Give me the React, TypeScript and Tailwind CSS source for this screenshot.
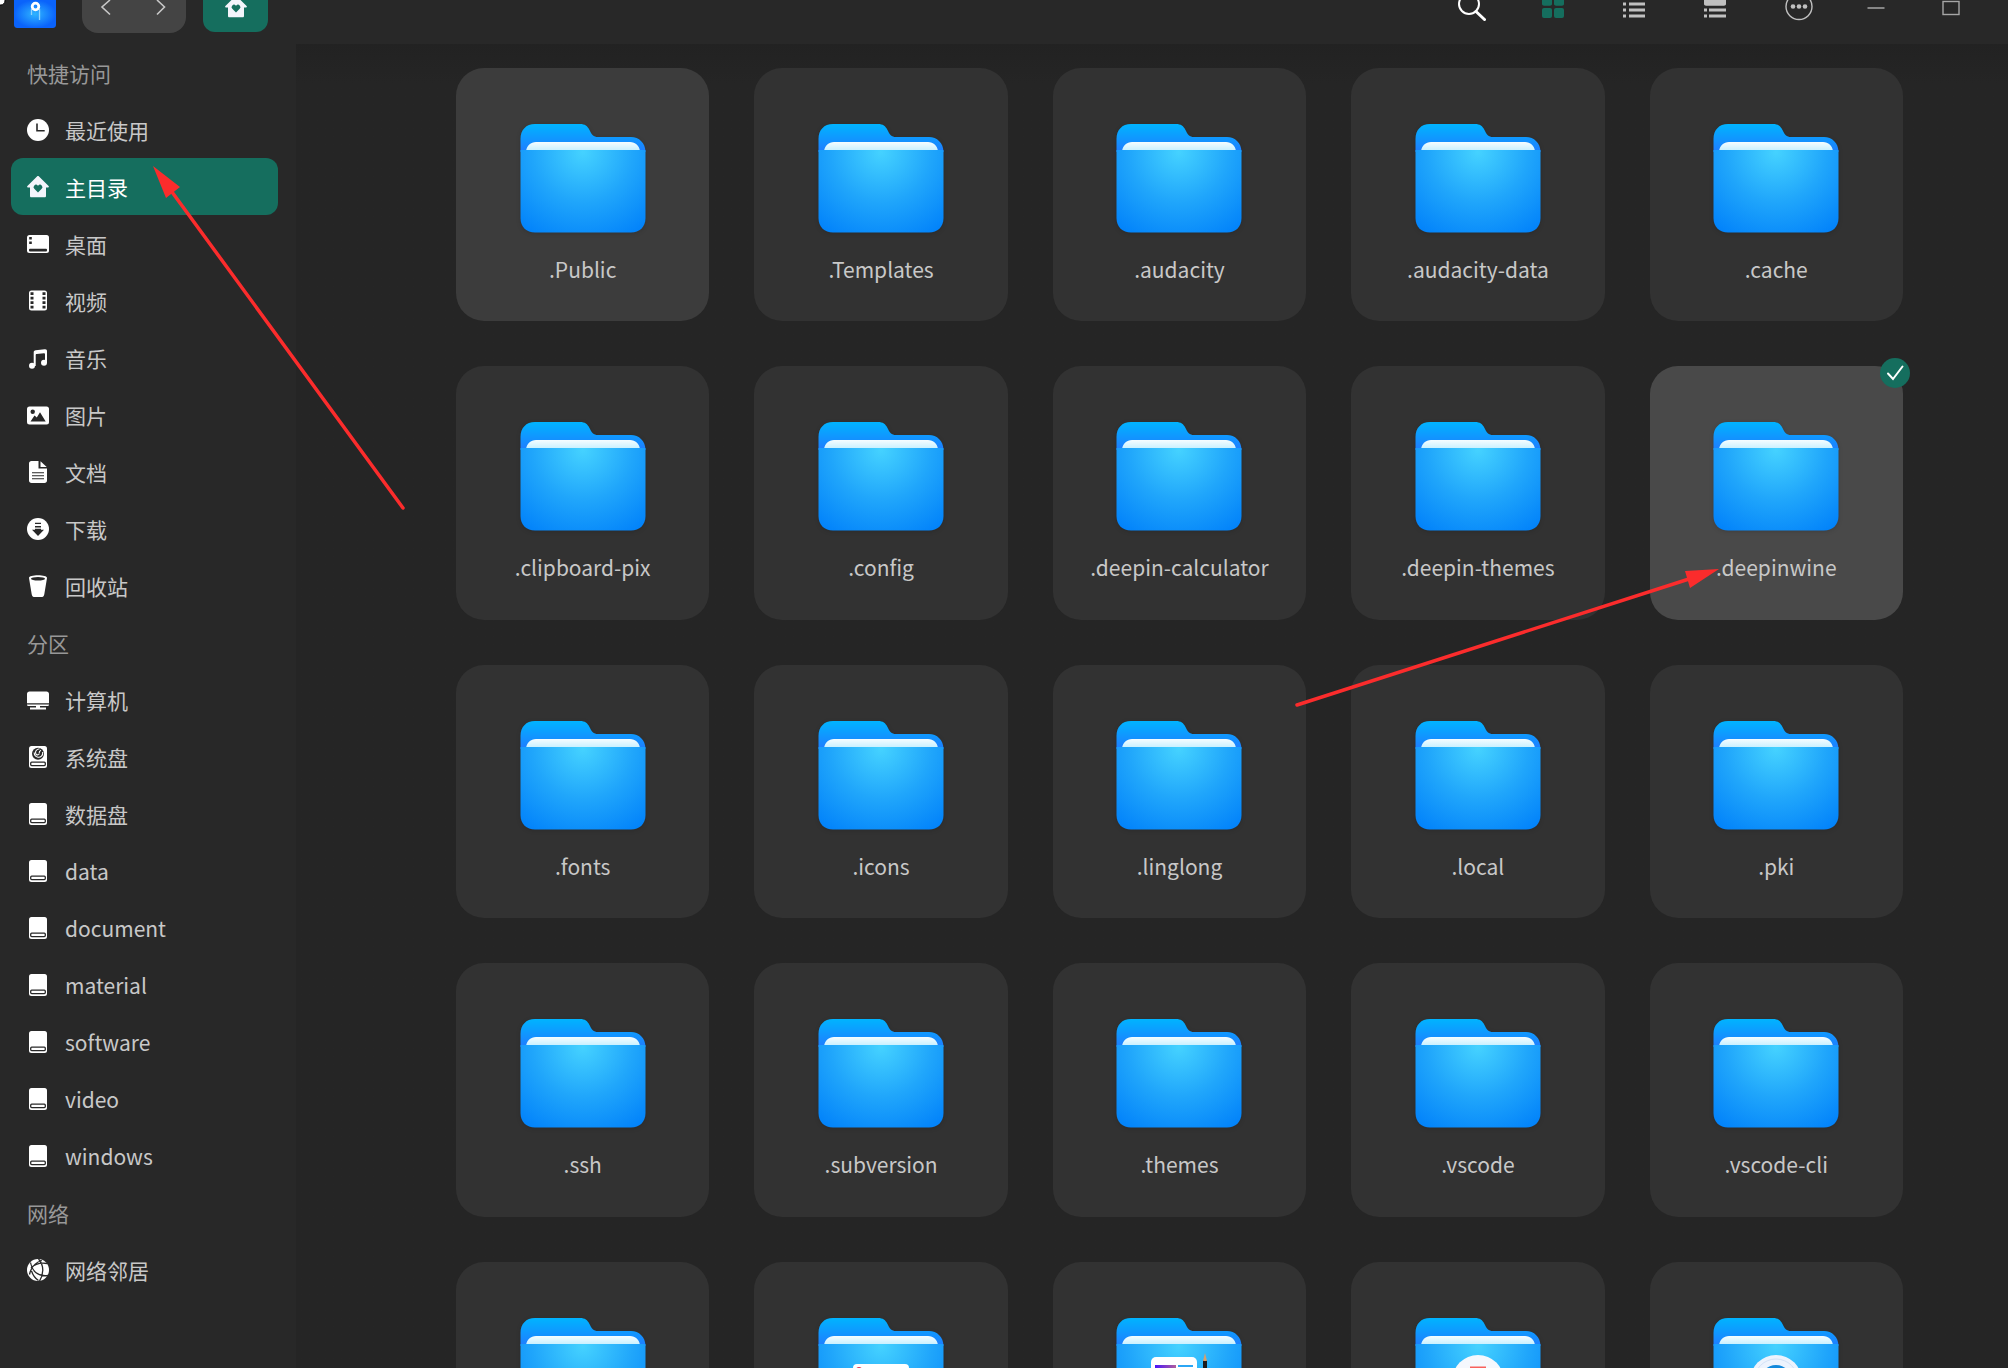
import { useState } from "react";
import type { ReactNode } from "react";
import clsx from "clsx";

type IconName =
    | "recent"
    | "home"
    | "desktop"
    | "video"
    | "music"
    | "image"
    | "document"
    | "download"
    | "trash"
    | "computer"
    | "system"
    | "disk"
    | "network";

type Place = { name: string; icon: IconName };
type Emblem = "document" | "picture" | "music" | "camera";
type Folder = { name: string; emblem?: Emblem };

const sections: { title: string; places: Place[] }[] = [
    {
        title: "快捷访问",
        places: [
            { name: "最近使用", icon: "recent" },
            { name: "主目录", icon: "home" },
            { name: "桌面", icon: "desktop" },
            { name: "视频", icon: "video" },
            { name: "音乐", icon: "music" },
            { name: "图片", icon: "image" },
            { name: "文档", icon: "document" },
            { name: "下载", icon: "download" },
            { name: "回收站", icon: "trash" },
        ],
    },
    {
        title: "分区",
        places: [
            { name: "计算机", icon: "computer" },
            { name: "系统盘", icon: "system" },
            { name: "数据盘", icon: "disk" },
            { name: "data", icon: "disk" },
            { name: "document", icon: "disk" },
            { name: "material", icon: "disk" },
            { name: "software", icon: "disk" },
            { name: "video", icon: "disk" },
            { name: "windows", icon: "disk" },
        ],
    },
    {
        title: "网络",
        places: [{ name: "网络邻居", icon: "network" }],
    },
];

const folders: Folder[] = [
    { name: ".Public" },
    { name: ".Templates" },
    { name: ".audacity" },
    { name: ".audacity-data" },
    { name: ".cache" },
    { name: ".clipboard-pix" },
    { name: ".config" },
    { name: ".deepin-calculator" },
    { name: ".deepin-themes" },
    { name: ".deepinwine" },
    { name: ".fonts" },
    { name: ".icons" },
    { name: ".linglong" },
    { name: ".local" },
    { name: ".pki" },
    { name: ".ssh" },
    { name: ".subversion" },
    { name: ".themes" },
    { name: ".vscode" },
    { name: ".vscode-cli" },
    { name: "" },
    { name: "", emblem: "document" },
    { name: "", emblem: "picture" },
    { name: "", emblem: "music" },
    { name: "", emblem: "camera" },
];

function HomeShape() {
    return (
        <>
            <path
                d="M10 .5c.6-.6 1.400-.6 2 0l9.600 9.600c.6.700.3 1.500-.6 1.500h-2v8.400c0 .8-.5 1.300-1.300 1.300H4.300c-.8 0-1.300-.5-1.300-1.300v-8.400H1c-.9 0-1.200-.8-.6-1.500z"
                fill="#f3f4fb"
            />
            <path
                d="M11 16.500 7.300 12.800a2.400 2.400 0 0 1 0-3.400 2.400 2.400 0 0 1 3.400 0l.3.300.3-.3a2.400 2.400 0 0 1 3.400 0 2.400 2.400 0 0 1 0 3.400z"
                fill="#156e5e"
            />
        </>
    );
}

function DiskShape() {
    return (
        <>
            <rect x="2" width="18" height="22" rx="2.5" fill="#fff" />
            <rect x="3.7" y="16.2" width="14.6" height="3.4" rx="1" fill="#fff" stroke="#282828" strokeWidth="1.3" />
        </>
    );
}

const placeIcons: Record<IconName, ReactNode> = {
    recent: (
        <>
            <circle cx="11" cy="11" r="11" fill="#fff" />
            <path d="M10 4.5v7.200h7.700" fill="none" stroke="#282828" strokeWidth="1.6" />
        </>
    ),
    home: <HomeShape />,
    desktop: (
        <>
            <rect y="2" width="22" height="18" rx="2.5" fill="#fff" />
            <path d="M2.200 4h2.600v2.600H2.200zM2.200 8.500h2.600v2.600H2.200z" fill="#282828" />
            <rect x="2" y="15.7" width="18" height="2.8" rx="1" fill="#282828" />
        </>
    ),
    video: (
        <>
            <rect x="2" y=".5" width="18" height="20" rx="2.5" fill="#fff" />
            <path
                d="M3.500 2.300h3v2.800h-3zM3.500 6.700h3v2.800h-3zM3.500 11.200h3V14h-3zM3.500 15.700h3v2.800h-3zM15.500 2.300h3v2.800h-3zM15.500 6.700h3v2.800h-3zM15.500 11.200h3V14h-3zM15.500 15.700h3v2.800h-3z"
                fill="#282828"
            />
        </>
    ),
    music: (
        <>
            <path
                d="M6.700 5.400c0-1.300.7-2 2-2.200l9-.9c1.600-.2 2.300.5 2.300 1.900V16h-2V7.200c0-.7-.4-1-1.100-.9l-7.200.8c-.7.1-1 .4-1 1.100V19h-2z"
                fill="#fff"
            />
            <circle cx="5" cy="18.8" r="3" fill="#fff" />
            <circle cx="17" cy="15.8" r="3" fill="#fff" />
        </>
    ),
    image: (
        <>
            <rect y="2.5" width="22" height="18" rx="2.5" fill="#fff" />
            <circle cx="5.7" cy="7.7" r="2.2" fill="#282828" />
            <path d="m3.500 17.500 4-6 2.300 2 3.200-5.200 5.700 9.200z" fill="#282828" />
        </>
    ),
    document: (
        <>
            <path d="M4.500 0h7v7.500H20v12c0 1.500-1 2.500-2.500 2.500h-13C3 22 2 21 2 19.500v-17C2 1 3 0 4.500 0z" fill="#fff" />
            <path d="M13.500.3 19.700 6h-6.200z" fill="#fff" />
            <path d="M5 11.700h12M5 14.700h12M5 17.700h12" stroke="#282828" strokeWidth="1.1" />
        </>
    ),
    download: (
        <>
            <circle cx="11" cy="11" r="11" fill="#fff" />
            <path d="M8 4.700h6v1.400H8zM8 8h6v1.400H8zM8 10.800h6v1h3L11 18l-6-6.200h3z" fill="#282828" />
        </>
    ),
    trash: (
        <>
            <path d="M2 3c0-1.700 4-2.700 9-2.700S20 1.300 20 3l-2.700 16.200c-.3 2-1.300 2.800-3.300 2.800H8c-2 0-3-.8-3.300-2.800z" fill="#fff" />
            <ellipse cx="11" cy="3.8" rx="7" ry="1.7" fill="#282828" />
        </>
    ),
    computer: (
        <path
            d="M2.500 2.500h17c1.500 0 2.500 1 2.500 2.500v9.300H0V5c0-1.500 1-2.500 2.500-2.500zM0 15.500h22c0 1-.7 1.600-1.700 1.600H13v1.500h6v1.900H3v-1.900h6v-1.500H1.700C.7 17.100 0 16.500 0 15.500z"
            fill="#fff"
        />
    ),
    system: (
        <>
            <DiskShape />
            <circle cx="11" cy="7.7" r="6" fill="#282828" />
            <path
                d="M12.500 2.700c-3 .3-4.700 2.800-3.700 5 .8 1.700 3.300 1.500 3.500-.2M15.700 6c.5 3.500-2.200 5.700-4.700 5.200-2-.4-3.800-2.400-3.800-4.700M14 4.200c-1.200.5-2 1.600-1.800 3"
                fill="none"
                stroke="#fff"
                strokeWidth="1.1"
            />
        </>
    ),
    disk: <DiskShape />,
    network: (
        <>
            <circle cx="11" cy="11" r="11" fill="#fff" />
            <path
                d="M11.500 0c5.500 6 5.500 15 1 22M15 1.500C8 3.500 4 8 2.500 15.500M3.500 3.500C5 12 11 18 21 16.500M4 9c4-4 10-5.500 16-4.500M4.500 12c1 3 3 7 7 9.500"
                fill="none"
                stroke="#282828"
                strokeWidth="1.3"
            />
        </>
    ),
};

function PlaceIcon({ name }: { name: IconName }) {
    return (
        <svg viewBox="0 0 22 22" className="size-[22px] shrink-0" aria-hidden="true">
            {placeIcons[name]}
        </svg>
    );
}

function FolderEmblem({ type }: { type: Emblem }) {
    if (type === "document") {
        return (
            <>
                <rect x="35" y="46" width="56" height="52" rx="4" fill="#fff" />
                <circle cx="41" cy="52" r="3" fill="#e0304a" />
            </>
        );
    }
    if (type === "picture") {
        return (
            <>
                <rect x="35" y="39" width="46" height="50" rx="5" fill="#fff" />
                <rect x="39" y="47" width="21" height="30" fill="url(#picture)" />
                <path d="M62 48h15M62 53h15" stroke="#2ba6f5" strokeWidth="2" />
                <path d="M87 42h4v50h-4z" fill="#1b1b1b" />
                <path d="m89 35 2 8h-4z" fill="#d9a06b" />
            </>
        );
    }
    if (type === "music") {
        return (
            <>
                <circle cx="63" cy="63" r="26" fill="#f5f8fd" />
                <path d="M56 66V49.500h14V66" fill="none" stroke="#f8615c" strokeWidth="2" />
            </>
        );
    }
    return (
        <>
            <circle cx="63" cy="63" r="26" fill="#edf3fd" />
            <circle cx="63" cy="63" r="22" fill="none" stroke="#d3e2f7" />
            <circle cx="63" cy="63" r="16" fill="#1389dc" />
            <circle cx="63" cy="63" r="13" fill="#3a16f0" />
        </>
    );
}

function FolderIcon({ emblem }: { emblem?: Emblem }) {
    return (
        <svg viewBox="0 0 126 109" className="h-[109px] w-[126px] shrink-0 drop-shadow-sm" aria-hidden="true">
            <path
                d="M.5 28V15C.5 6 6 0 15 0h45c5 0 7.500 2 9.500 6 2 4.500 4 7 8.500 7h33c8 0 14.500 6 14.500 15z"
                fill="url(#folderBack)"
            />
            <path d="M6 27c1-5.500 4.500-9 10-9h94c5.500 0 9 3.500 10 9z" fill="url(#folderPaper)" />
            <path d="M.5 26h125v68c0 9-6 14.500-14.500 14.500H15C6.500 108.500.5 103 .5 94z" fill="url(#folderFront)" />
            {emblem && <FolderEmblem type={emblem} />}
        </svg>
    );
}

function Gradients() {
    return (
        <svg className="absolute size-0" aria-hidden="true">
            <defs>
                <linearGradient id="folderBack" x1="0" y1="0" x2="0" y2="1">
                    <stop offset="0" stopColor="#00b4ff" />
                    <stop offset="1" stopColor="#1f7cff" />
                </linearGradient>
                <linearGradient id="folderPaper" x1="0" y1="0" x2="0" y2="1">
                    <stop offset="0" stopColor="#f6fdff" />
                    <stop offset="1" stopColor="#c4efff" />
                </linearGradient>
                <radialGradient id="folderFront" gradientUnits="userSpaceOnUse" cx="63" cy="28" r="100">
                    <stop offset="0" stopColor="#45d2ff" />
                    <stop offset=".5" stopColor="#20a6fb" />
                    <stop offset="1" stopColor="#0080fa" />
                </radialGradient>
                <linearGradient id="picture">
                    <stop offset="0" stopColor="#4a14fa" />
                    <stop offset="1" stopColor="#b0609c" />
                </linearGradient>
                <radialGradient id="appIcon">
                    <stop offset="0" stopColor="#2fb4ff" />
                    <stop offset="1" stopColor="#0a63fb" />
                </radialGradient>
            </defs>
        </svg>
    );
}

function Header() {
    const toolButton = "flex h-full w-[81px] justify-center";

    return (
        <header className="flex h-11 shrink-0 items-start bg-[#282828] pr-5 pl-3.5">
            <svg width="42" height="28" viewBox="0 0 42 28" aria-hidden="true">
                <path d="M0 0h42v24c0 3-1 4-4 4H4c-3 0-4-1-4-4z" fill="url(#appIcon)" />
                <path d="M17.500 9v6M25.500 9v11" stroke="#8fd3ff" strokeWidth="1.3" />
                <circle cx="21.5" cy="6.5" r="3.3" fill="none" stroke="#fff" strokeWidth="2.8" />
            </svg>

            <div className="ml-[26px] flex h-[33px] w-[104px] justify-between rounded-b-2xl bg-[#444444] px-[18px]">
                <button aria-label="后退">
                    <svg width="12" height="33" viewBox="0 0 12 33" fill="none" stroke="#c8c8c8" strokeWidth="1.6">
                        <path d="M10 0 2 7l8 7.500" />
                    </svg>
                </button>
                <button aria-label="前进">
                    <svg width="12" height="33" viewBox="0 0 12 33" fill="none" stroke="#c8c8c8" strokeWidth="1.6">
                        <path d="m1 0 7.500 7L1 14.500" />
                    </svg>
                </button>
            </div>

            <button aria-label="主目录" className="ml-[17px] flex h-8 w-[65px] justify-center rounded-b-xl bg-[#156e5e]">
                <svg width="22" height="18" viewBox="0 4 22 18" aria-hidden="true">
                    <HomeShape />
                </svg>
            </button>

            <div className="ml-auto flex h-full">
                <button aria-label="搜索" className={toolButton}>
                    <svg width="28" height="22" viewBox="0 0 28 22" fill="none" stroke="#fff">
                        <circle cx="11" cy="4" r="10" strokeWidth="2" />
                        <path d="m18 11.500 8.500 8" strokeWidth="3" strokeLinecap="round" />
                    </svg>
                </button>
                <button aria-label="图标视图" className={toolButton}>
                    <svg width="22" height="18" viewBox="0 0 22 18" fill="#156e5e">
                        <path d="M0 0h10v4c0 1-1 1.700-2 1.700H2C1 5.700 0 5 0 4zM12 0h10v4c0 1-1 1.700-2 1.700h-6c-1 0-2-.7-2-1.700z" />
                        <rect y="8" width="10" height="10" rx="2" />
                        <rect x="12" y="8" width="10" height="10" rx="2" />
                    </svg>
                </button>
                <button aria-label="列表视图" className={toolButton}>
                    <svg width="22" height="18" viewBox="0 0 22 18" fill="#c0c0c0">
                        <path d="M0 2.500h3v3H0zM6 2.500h16v3H6zM0 8.500h3v3H0zM6 8.500h16v3H6zM0 14.500h3v3H0zM6 14.500h16v3H6z" />
                    </svg>
                </button>
                <button aria-label="树形视图" className={toolButton}>
                    <svg width="22" height="18" viewBox="0 0 22 18" fill="#c0c0c0">
                        <path d="M0 0h22v4c0 1-1 1.700-2 1.700H2C1 5.700 0 5 0 4zM0 8.500h3v3H0zM5 8.500h17v3H5zM0 14.500h3v3H0zM5 14.500h17v3H5z" />
                    </svg>
                </button>
                <button aria-label="更多" className="ml-[5px] flex h-full w-[78px] justify-center">
                    <svg width="28" height="21" viewBox="0 0 28 21" fill="#c0c0c0">
                        <circle cx="14" cy="6.5" r="13" fill="none" stroke="#c0c0c0" strokeWidth="1.4" />
                        <circle cx="8" cy="6.5" r="2.3" />
                        <circle cx="14" cy="6.5" r="2.3" />
                        <circle cx="20" cy="6.5" r="2.3" />
                    </svg>
                </button>
                <button aria-label="最小化" className="flex h-full w-[75px] justify-center">
                    <svg width="18" height="16" viewBox="0 0 18 16" stroke="#a6a6a6" strokeWidth="1.5">
                        <path d="M.5 8h17" />
                    </svg>
                </button>
                <button aria-label="最大化" className="flex h-full w-[75px] justify-center">
                    <svg width="18" height="16" viewBox="0 0 18 16" fill="none" stroke="#a6a6a6" strokeWidth="1.4">
                        <rect x="1" y="1.5" width="16" height="13" />
                    </svg>
                </button>
            </div>
        </header>
    );
}

function Sidebar() {
    const [current, setCurrent] = useState("主目录");

    return (
        <nav className="w-[296px] shrink-0 bg-[#282828] pr-[18px] pl-[11px]">
            {sections.map((section) => (
                <section key={section.title}>
                    <h2 className="flex h-[57px] items-center pt-px pl-4 text-[#989898]">{section.title}</h2>
                    {section.places.map((place) => (
                        <a
                            key={place.name}
                            href="#"
                            onClick={() => setCurrent(place.name)}
                            className={clsx(
                                "flex h-[57px] items-center gap-4 rounded-xl pl-4",
                                place.name === current ? "bg-[#156e5e] text-white" : "text-[#c8c8c8]"
                            )}
                        >
                            <PlaceIcon name={place.icon} />
                            <span className="pt-px">{place.name}</span>
                        </a>
                    ))}
                </section>
            ))}
        </nav>
    );
}

function FolderCard({ folder, hovered, selected }: { folder: Folder; hovered: boolean; selected: boolean }) {
    return (
        <button
            className={clsx(
                "relative flex aspect-square flex-col items-center rounded-[28px] pt-14",
                selected ? "bg-[#494949]" : hovered ? "bg-[#3c3c3c]" : "bg-[#323232]"
            )}
        >
            <FolderIcon emblem={folder.emblem} />
            <span className="mt-5 text-[#c8c8c8]">{folder.name}</span>
            {selected && (
                <span className="absolute -top-2 -right-[7px] flex size-[30px] items-center justify-center rounded-full bg-[#156e5e]">
                    <svg width="18" height="16" viewBox="0 0 18 16" fill="none" stroke="#fff" strokeWidth="2">
                        <path d="m2 8.500 5 5.500L16.500 1.500" strokeLinecap="round" />
                    </svg>
                </span>
            )}
        </button>
    );
}

// Red pointers and the mouse cursor, drawn over the whole window
function Arrows() {
    return (
        <svg className="pointer-events-none absolute top-0 left-0" width="2008" height="1368" aria-hidden="true">
            <g stroke="#fb2c2c" strokeWidth="3.5" strokeLinecap="round">
                <path d="M403 508 172 192M1297 705l392-126" />
            </g>
            <path d="m153 166 27 21-14 11zM1719 569l-34 2 5 17z" fill="#fb2c2c" />
            <path d="M-2-2H5V1c0 2-2 4-4 4h-3z" fill="#fff" stroke="#000" strokeWidth="1" />
        </svg>
    );
}

export default function App() {
    return (
        <div className="relative flex h-screen flex-col overflow-hidden bg-[#252525] font-['Noto_Sans_CJK_SC',sans-serif] text-[21px] leading-8">
            <Gradients />
            <Header />
            <div className="flex min-h-0 flex-1">
                <Sidebar />
                <main className="min-w-0 flex-1 overflow-hidden bg-linear-to-b from-[#222222] to-[#252525] to-3% pt-6 pr-[105px] pl-40">
                    <div className="grid grid-cols-5 gap-[45px]">
                        {folders.map((folder, i) => (
                            <FolderCard
                                key={i}
                                folder={folder}
                                hovered={folder.name === ".Public"}
                                selected={folder.name === ".deepinwine"}
                            />
                        ))}
                    </div>
                </main>
            </div>
            <Arrows />
        </div>
    );
}
